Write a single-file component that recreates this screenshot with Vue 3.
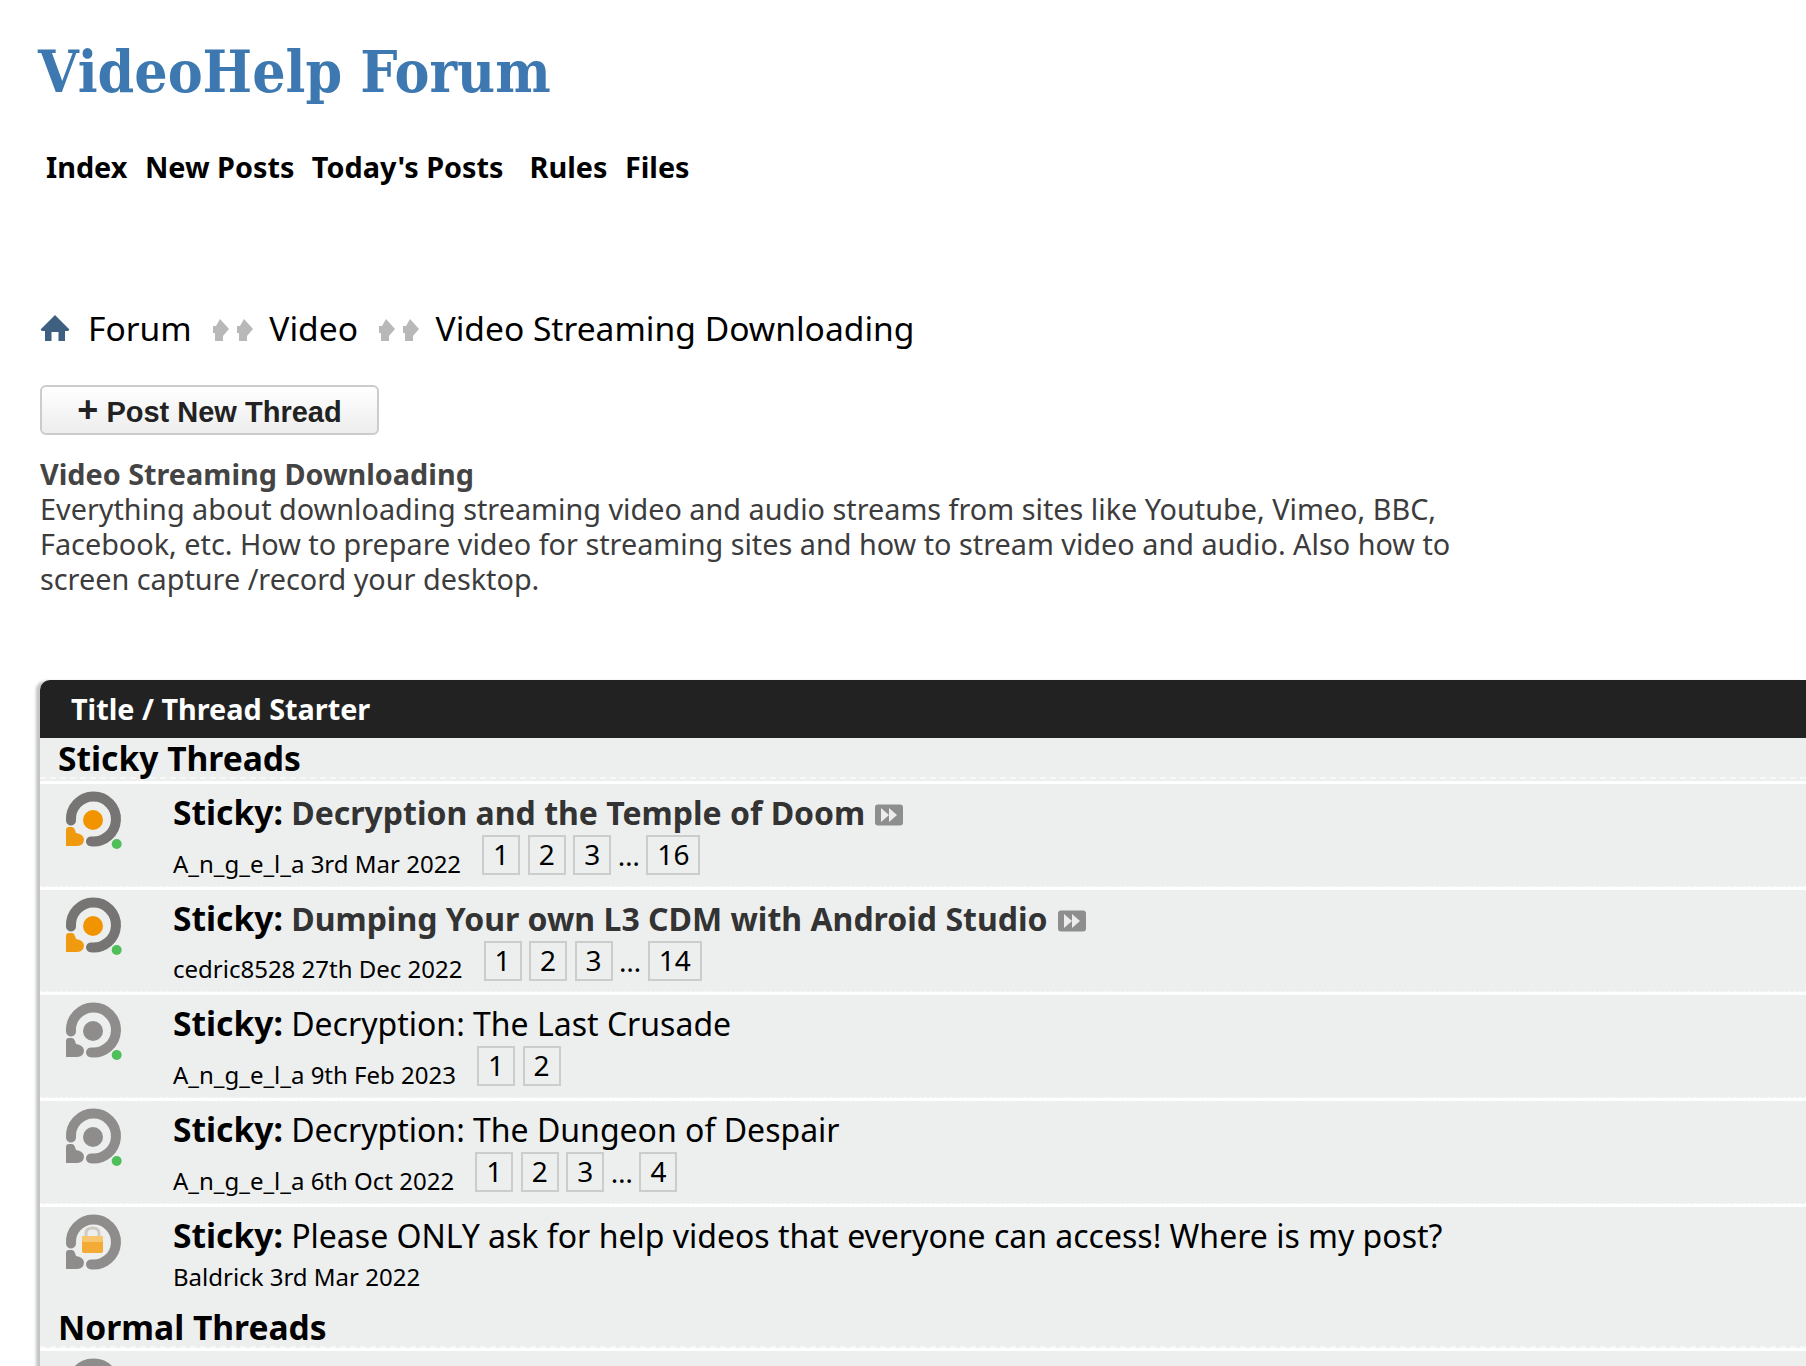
<script setup>
const nav = [
  { label: 'Index', cls: '' },
  { label: 'New Posts', cls: '' },
  { label: "Today's Posts", cls: 'wide' },
  { label: 'Rules', cls: '' },
  { label: 'Files', cls: '' }
]
const rows = [
  { kind: 'new', title: 'Decryption and the Temple of Doom', bold: true, by: 'A_n_g_e_l_a 3rd Mar 2022', pages: ['1', '2', '3', '…', '16'] },
  { kind: 'new', title: 'Dumping Your own L3 CDM with Android Studio', bold: true, by: 'cedric8528 27th Dec 2022', pages: ['1', '2', '3', '…', '14'] },
  { kind: 'old', title: 'Decryption: The Last Crusade', by: 'A_n_g_e_l_a 9th Feb 2023', pages: ['1', '2'] },
  { kind: 'old', title: 'Decryption: The Dungeon of Despair', by: 'A_n_g_e_l_a 6th Oct 2022', pages: ['1', '2', '3', '…', '4'] },
  { kind: 'lock', title: 'Please ONLY ask for help videos that everyone can access! Where is my post?', by: 'Baldrick 3rd Mar 2022', pages: [] }
]
const ring = 'M7 32.5 A22.5 22.5 0 1 1 27 53.4'
const blob = 'M2 42 Q2 39 5 39 L8 39 Q10 39 11 42 L12 45 Q19 46 20 51 Q20 58 13 58 L2 58 Z'
const arrow = 'M8 1 L17 11 L11 18 L11 23 L3 23 L3 15 L1 15 L1 8 L4 8 Z'
</script>

<template>
  <div class="page">
    <h1 class="brand">VideoHelp Forum</h1>
    <nav class="nav">
      <a v-for="n in nav" :key="n.label" :class="n.cls">{{ n.label }}</a>
    </nav>

    <div class="crumbs">
      <svg class="home" viewBox="0 0 30 28" width="30" height="28">
        <path d="M15 1 L29 15 Q29.5 17 27 17 L25 17 L25 27 L18.5 27 L18.5 18 L11.5 18 L11.5 27 L5 27 L5 17 L3 17 Q.5 17 1 15 Z" fill="#3f5f80" />
      </svg>
      <span>Forum</span>
      <svg class="sep" viewBox="0 0 42 24" width="42" height="24">
        <path :d="arrow" fill="#b8b8b8" />
        <path :d="arrow" fill="#b8b8b8" transform="translate(24 0)" />
      </svg>
      <span>Video</span>
      <svg class="sep" viewBox="0 0 42 24" width="42" height="24">
        <path :d="arrow" fill="#b8b8b8" />
        <path :d="arrow" fill="#b8b8b8" transform="translate(24 0)" />
      </svg>
      <span>Video Streaming Downloading</span>
    </div>

    <button class="post"><span class="plus">+</span> Post New Thread</button>

    <div class="desc">
      <strong>Video Streaming Downloading</strong><br />
      Everything about downloading streaming video and audio streams from sites like Youtube, Vimeo, BBC,<br />
      Facebook, etc. How to prepare video for streaming sites and how to stream video and audio. Also how to<br />
      screen capture /record your desktop.
    </div>

    <section class="table">
      <div class="head">Title / Thread Starter</div>
      <div class="group">Sticky Threads</div>
      <div v-for="r in rows" :key="r.title" class="row" :class="{ last: r.kind === 'lock' }">
        <svg class="ico" viewBox="0 0 66 62" width="66" height="62">
          <path :d="ring" fill="none" :stroke="r.kind === 'new' ? '#777574' : '#8f8d8c'" stroke-width="10" stroke-linecap="round" />
          <path :d="blob" :fill="r.kind === 'new' ? '#f09a10' : '#8f8d8c'" />
          <template v-if="r.kind !== 'lock'">
            <circle cx="29" cy="32" r="10" :fill="r.kind === 'new' ? '#f29400' : '#8f8d8c'" />
            <circle cx="52.7" cy="56" r="5" fill="#4fbf5a" />
          </template>
          <template v-else>
            <path d="M22 27 V22 Q22 17 28.5 17 Q35 17 35 22 V27" fill="none" stroke="#cfcac2" stroke-width="3" />
            <rect x="18" y="25" width="21" height="17" rx="2" fill="#f4ab35" />
            <rect x="18" y="25" width="21" height="6" rx="2" fill="#f9c670" />
          </template>
        </svg>
        <div class="body">
          <div class="title">
            <b>Sticky:</b> <span :class="{ unread: r.bold }">{{ r.title }}</span>
            <svg v-if="r.bold" class="goto" viewBox="0 0 28 22" width="28" height="22">
              <rect width="28" height="21" y=".5" rx="3" fill="#8e8e8e" />
              <path d="M6 4 L14 11 L6 18 Z M14 4 L22 11 L14 18 Z" fill="#ececec" />
            </svg>
          </div>
          <div class="meta" :class="{ plain: !r.pages.length }">
            <span class="by">{{ r.by }}</span>
            <span v-if="r.pages.length" class="pages">
              <template v-for="p in r.pages" :key="p">
                <span v-if="p === '…'" class="dots">…</span>
                <span v-else class="pg">{{ p }}</span>
              </template>
            </span>
          </div>
        </div>
      </div>
      <div class="group g2">Normal Threads</div>
      <div class="row">
        <svg class="ico" viewBox="0 0 66 62" width="66" height="62">
          <path :d="ring" fill="none" stroke="#8f8d8c" stroke-width="10" stroke-linecap="round" />
        </svg>
      </div>
    </section>
  </div>
</template>

<style scoped>
.page {
  height: 1366px;
  width: 1806px;
  overflow: hidden;
  box-sizing: border-box;
  font-family: "Noto Sans", sans-serif;
  color: #000;
  background: #fff;
  padding-top: 32px;
}
.brand {
  margin: 0 0 0 38px;
  font-family: "DejaVu Serif Condensed", "DejaVu Serif", serif;
  font-stretch: condensed;
  font-size: 58.3px;
  line-height: 80px;
  font-weight: 700;
  color: #3d79b0;
}
.nav {
  display: flex;
  gap: 17.5px;
  margin: 36px 0 0 46px;
  font-size: 28.8px;
  line-height: 38px;
  font-weight: 700;
}
.nav .wide { margin-right: 8.5px; }
.crumbs {
  display: flex;
  align-items: center;
  margin: 119px 0 0 40px;
  font-size: 33.6px;
  line-height: 46px;
}
.home { margin-right: 18px; filter: blur(.4px); }
.sep { margin: 4px 15.5px 0 20px; filter: blur(.5px); }
.post {
  display: block;
  width: 339px;
  height: 50px;
  margin: 34px 0 0 40px;
  padding: 3px 0 0;
  box-sizing: border-box;
  border: 2px solid #ccc;
  border-radius: 6px;
  background: linear-gradient(#fff, #ededed);
  font-family: "Liberation Sans", Arial, sans-serif;
  font-size: 29px;
  font-weight: 700;
  color: #222;
}
.plus { font-size: 36px; line-height: 30px; }
.desc {
  margin: 21px 0 0 40px;
  font-size: 28.8px;
  line-height: 35px;
  color: #3c3c3c;
}
.desc strong { color: #444; }
.table {
  margin: 84px 0 0 40px;
  box-shadow: -5px 0 3px -1px #c4c4c4;
  border-radius: 10px 0 0 0;
  background: #edefef;
}
.head {
  height: 58px;
  padding-left: 31px;
  box-sizing: border-box;
  background: #222;
  color: #fff;
  border-radius: 10px 0 0 0;
  font-size: 28.8px;
  line-height: 58px;
  font-weight: 700;
}
.group {
  height: 39px;
  padding-left: 18px;
  font-size: 33.6px;
  line-height: 41px;
  font-weight: 700;
  border-bottom: 2px dashed #f6f7f7;
  margin-bottom: 2px;
}
.g2 { height: 41px; line-height: 44px; margin-bottom: 0; }
.row {
  display: flex;
  height: 101.7px;
  border-top: 3px solid #fff;
  border-bottom: 1px dashed #f6f7f7;
}
.row.last { height: 98px; border-bottom: 0; }
.ico {
  flex: none;
  margin: 4px 0 0 24px;
  filter: blur(.7px);
}
.body { margin-left: 43px; }
.title {
  margin-top: 6px;
  font-size: 32px;
  line-height: 44px;
  white-space: nowrap;
}
.title b { font-size: 33.6px; line-height: 44px; }
.unread { font-weight: 700; color: #333; }
.goto { margin-left: 10px; vertical-align: -1px; filter: blur(.5px); }
.meta {
  display: flex;
  align-items: flex-end;
  margin-top: 0;
  font-size: 24px;
  line-height: 32px;
}
.by { margin-bottom: -4.6px; }
.meta.plain { margin-top: 3px; }
.plain .by { margin-bottom: 0; }
.pages {
  display: flex;
  align-items: center;
  gap: 7.5px;
  margin-left: 21px;
}
.pg {
  box-sizing: border-box;
  min-width: 37.5px;
  height: 40px;
  padding: 0 9px;
  border: 2px solid #ccc;
  text-align: center;
  font-size: 28px;
  line-height: 34px;
}
.dots { font-size: 28px; line-height: 40px; margin: 0 -1px; }
</style>
